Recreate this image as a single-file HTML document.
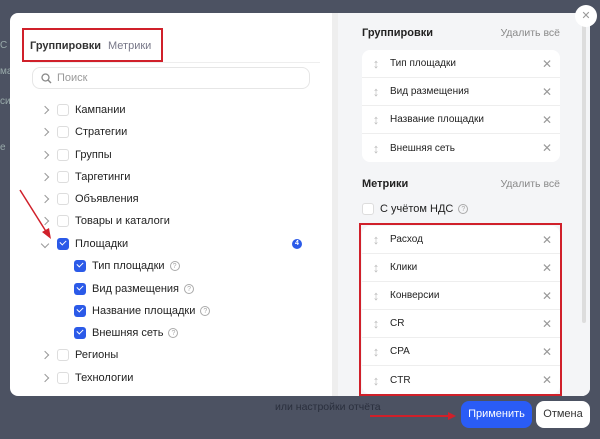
<!DOCTYPE html><html><head><meta charset="utf-8"><style>
*{box-sizing:border-box;margin:0;padding:0}
body{width:600px;height:439px;overflow:hidden;background:#4c5262;font-family:"Liberation Sans",sans-serif;position:relative;font-size:11px;color:#222}
.a{position:absolute}
.modal{left:10px;top:13px;width:580px;height:383px;background:#fff;border-radius:8px;overflow:hidden}
.right{left:328px;top:0;width:252px;height:383px;background:#f4f5f7}
.row{position:absolute;left:0;height:22px;display:flex;align-items:center;font-size:11px}
.chev{width:6px;height:6px;border-right:1.3px solid #999;border-bottom:1.3px solid #999;transform:rotate(-45deg);margin-left:32px;margin-right:9px}
.cb{width:12px;height:12px;border:1px solid #ddd;border-radius:3px;background:#fff;margin-right:6px}
.cbc{width:12px;height:12px;border-radius:3px;background:#2b5ae8;margin-right:6px;position:relative}
.cbc:after{content:"";position:absolute;left:3px;top:2px;width:5px;height:3px;border-left:1.5px solid #fff;border-bottom:1.5px solid #fff;transform:rotate(-45deg)}
.q{display:inline-block;width:10px;height:10px;border:1px solid #aaa;border-radius:50%;font-size:7px;color:#aaa;text-align:center;line-height:9px;margin-left:5px}
.card{position:absolute;left:24px;width:198px;background:#fff;border-radius:8px}
.it{height:28px;border-bottom:1px solid #eee;display:flex;align-items:center;font-size:10px;position:relative}
.it:last-child{border-bottom:none}
.it .d{color:#bbb;width:28px;text-align:center;font-size:13px}
.it .x{position:absolute;right:8px;color:#999;font-size:12px}
.red{position:absolute;border:2px solid #d0202a}
</style></head><body>
<div class="a" style="left:0;top:40px;color:#9aa;font-size:10px">С</div>
<div class="a" style="left:0;top:66px;color:#9aa;font-size:10px">ма</div>
<div class="a" style="left:0;top:96px;color:#9aa;font-size:10px">си</div>
<div class="a" style="left:0;top:142px;color:#9aa;font-size:10px">е</div>
<div class="a modal">
 <div class="a" style="left:20px;top:27px;font-size:11px;font-weight:bold;color:#333">Группировки</div>
 <div class="a" style="left:98px;top:27px;font-size:11px;color:#778">Метрики</div>
 <div class="a" style="left:20px;top:49px;width:290px;height:1px;background:#eee"></div>
 <div class="a" style="left:22px;top:54px;width:278px;height:22px;border:1px solid #e6e6e6;border-radius:8px;color:#999;font-size:11px;padding:4px 0 0 24px">Поиск
  <svg class="a" style="left:8px;top:5px" width="11" height="11"><circle cx="4.5" cy="4.5" r="3.5" fill="none" stroke="#888" stroke-width="1.3"/><line x1="7" y1="7" x2="10" y2="10" stroke="#888" stroke-width="1.4"/></svg></div>
 <div class="a" style="left:0;top:86px;width:320px">
  <div class="row" style="top:0"><span class="chev"></span><span class="cb"></span>Кампании</div>
  <div class="row" style="top:22px"><span class="chev"></span><span class="cb"></span>Стратегии</div>
  <div class="row" style="top:45px"><span class="chev"></span><span class="cb"></span>Группы</div>
  <div class="row" style="top:67px"><span class="chev"></span><span class="cb"></span>Таргетинги</div>
  <div class="row" style="top:89px"><span class="chev"></span><span class="cb"></span>Объявления</div>
  <div class="row" style="top:111px"><span class="chev"></span><span class="cb"></span>Товары и каталоги</div>
  <div class="row" style="top:134px"><span class="chev" style="transform:rotate(45deg)"></span><span class="cbc"></span>Площадки</div>
  <div class="a" style="left:282px;top:140px;width:10px;height:10px;border-radius:50%;background:#2b5ae8;color:#fff;font-size:7px;text-align:center;line-height:10px;font-weight:bold">4</div>
  <div class="row" style="top:156px;left:64px"><span class="cbc"></span>Тип площадки<span class="q">?</span></div>
  <div class="row" style="top:179px;left:64px"><span class="cbc"></span>Вид размещения<span class="q">?</span></div>
  <div class="row" style="top:201px;left:64px"><span class="cbc"></span>Название площадки<span class="q">?</span></div>
  <div class="row" style="top:223px;left:64px"><span class="cbc"></span>Внешняя сеть<span class="q">?</span></div>
  <div class="row" style="top:245px"><span class="chev"></span><span class="cb"></span>Регионы</div>
  <div class="row" style="top:268px"><span class="chev"></span><span class="cb"></span>Технологии</div>
 </div>
 <div class="a" style="left:322px;top:0;width:6px;height:383px;background:#eee"></div>
 <div class="a right">
  <div class="a" style="right:4px;top:10px;width:4px;height:300px;background:#ddd;border-radius:2px"></div>
  <div class="a" style="left:24px;top:14px;font-weight:bold;font-size:11px">Группировки</div>
  <div class="a" style="right:30px;top:14px;color:#888;font-size:10.5px">Удалить всё</div>
  <div class="card" style="top:37px">
   <div class="it"><span class="d">↕</span>Тип площадки<span class="x">✕</span></div>
   <div class="it"><span class="d">↕</span>Вид размещения<span class="x">✕</span></div>
   <div class="it"><span class="d">↕</span>Название площадки<span class="x">✕</span></div>
   <div class="it"><span class="d">↕</span>Внешняя сеть<span class="x">✕</span></div>
  </div>
  <div class="a" style="left:24px;top:165px;font-weight:bold;font-size:11px">Метрики</div>
  <div class="a" style="right:30px;top:165px;color:#888;font-size:10.5px">Удалить всё</div>
  <div class="a" style="left:24px;top:190px;display:flex;align-items:center;font-size:11px"><span class="cb"></span>С учётом НДС<span class="q">?</span></div>
  <div class="card" style="top:213px">
   <div class="it"><span class="d">↕</span>Расход<span class="x">✕</span></div>
   <div class="it"><span class="d">↕</span>Клики<span class="x">✕</span></div>
   <div class="it"><span class="d">↕</span>Конверсии<span class="x">✕</span></div>
   <div class="it"><span class="d">↕</span>CR<span class="x">✕</span></div>
   <div class="it"><span class="d">↕</span>CPA<span class="x">✕</span></div>
   <div class="it"><span class="d">↕</span>CTR<span class="x">✕</span></div>
  </div>
 </div>
</div>
<div class="a" style="left:575px;top:5px;width:22px;height:22px;border-radius:50%;background:#fff;color:#999;text-align:center;line-height:22px;font-size:11px">✕</div>
<div class="red" style="left:22px;top:28px;width:141px;height:34px"></div>
<div class="red" style="left:359px;top:223px;width:203px;height:173px"></div>
<div class="a" style="left:275px;top:401px;color:#2a2f3d;font-size:10.5px">или настройки отчёта</div>
<div class="a" style="left:461px;top:401px;width:71px;height:27px;border-radius:8px;background:#2a5cf6;color:#fff;font-size:11px;text-align:center;line-height:27px">Применить</div>
<div class="a" style="left:536px;top:401px;width:54px;height:27px;border-radius:8px;background:#fff;color:#333;font-size:11px;text-align:center;line-height:27px">Отмена</div>
<svg class="a" style="left:0;top:0" width="600" height="439">
 <line x1="370" y1="416" x2="450" y2="416" stroke="#d0202a" stroke-width="2"/><polygon points="456,416 448,412 448,420" fill="#d0202a"/>
 <line x1="20" y1="190" x2="47" y2="233" stroke="#d0202a" stroke-width="1.5"/><polygon points="51,239 42,232 49,228" fill="#d0202a"/>
</svg>
</body></html>
